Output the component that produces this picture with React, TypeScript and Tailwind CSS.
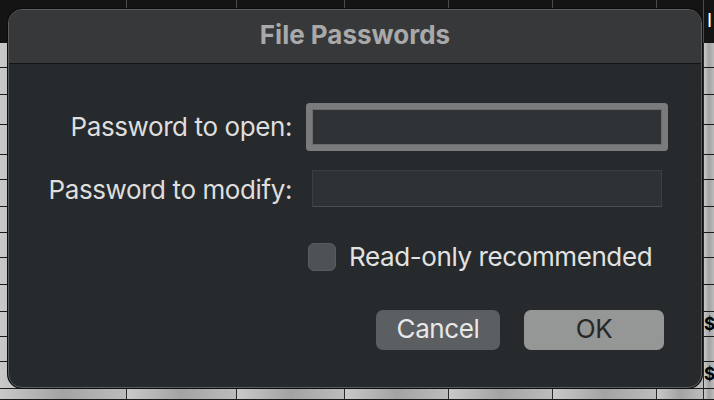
const cols = [127, 110, 108, 104, 104, 104, 47, 10];
const rows = [25, 27, 30, 30, 25, 27, 26, 25, 27, 27, 25, 25, 27, 11];

export default function App() {
  return (
    <div className="relative w-[714px] h-[400px] overflow-hidden bg-[#141414] font-['Inter',sans-serif]">
      {/* spreadsheet behind the dialog */}
      <div className="flex flex-col">
        <div className="flex h-[43px]">
          {cols.map((w, i) => (
            <div
              key={i}
              style={{ width: w }}
              className="shrink-0 border-r border-[#4d4d4d] last:border-r-0"
            >
              {i === cols.length - 1 && (
                <span className="block pl-[3px] pt-[11px] text-[19px] leading-none text-white">I</span>
              )}
            </div>
          ))}
        </div>
        {rows.map((h, r) => (
          <div key={r} style={{ height: h }} className="flex border-b border-[#1a1a1a]">
            {cols.map((w, i) => (
              <div
                key={i}
                style={{ width: w }}
                className="shrink-0 border-r border-[#2a2a2a] bg-gradient-to-r from-[#c9c9c9] via-[#a3a3a3] to-[#bcbcbc] last:border-r-0"
              >
                {i === cols.length - 1 && (r === 10 || r === 12) && (
                  <span className="block pt-[4px] text-[17px] font-bold leading-none text-black">$</span>
                )}
              </div>
            ))}
          </div>
        ))}
      </div>

      {/* dialog */}
      <div className="absolute left-[8px] top-[9px] flex h-[379px] w-[694px] flex-col overflow-hidden rounded-[14px] border border-[#5b5d5f] bg-[#272a2c] shadow-[0_0_0_1px_#0d0d0d]">
        <div className="flex h-[54px] items-center justify-center border-b border-[#141516] bg-[#37383a] pb-[3px]">
          <span className="text-[26px] font-bold leading-none text-[#a9a9aa]">File Passwords</span>
        </div>

        <div className="flex flex-col pt-[45px] text-[26px] leading-none tracking-[-0.4px]">
          <div className="flex h-[36px] items-center">
            <div className="w-[283px] text-right text-[#dedede]">Password to open:</div>
            <div className="ml-[20px] h-[36px] w-[350px] rounded-[1px] border border-[#6a6c6e] bg-[#303335] shadow-[0_0_0_6px_#7a7b7c]" />
          </div>

          <div className="mt-[25px] flex h-[37px] items-center">
            <div className="w-[283px] pt-[3px] text-right text-[#dedede]">Password to modify:</div>
            <div className="ml-[20px] h-[37px] w-[350px] border border-[#3c3f41] border-b-[#4b4e50] bg-[#2f3234]" />
          </div>

          <div className="mt-[36px] flex h-[28px] items-center pl-[299px]">
            <div className="h-[28px] w-[28px] rounded-[6px] border border-[#5a5d5f] bg-[#4f5254]" />
            <span className="ml-[13px] text-[#e2e2e2]">Read-only recommended</span>
          </div>

          <div className="mt-[39px] flex h-[40px] justify-end gap-[24px] pr-[37px]">
            <button className="flex h-[40px] w-[124px] items-center justify-center rounded-[7px] bg-[#5c5f61] pb-[3px] text-[#e8e8e8]">
              Cancel
            </button>
            <button className="flex h-[40px] w-[140px] items-center justify-center rounded-[7px] bg-[#959696] pb-[3px] text-[#282828]">
              OK
            </button>
          </div>
        </div>
      </div>
    </div>
  );
}
